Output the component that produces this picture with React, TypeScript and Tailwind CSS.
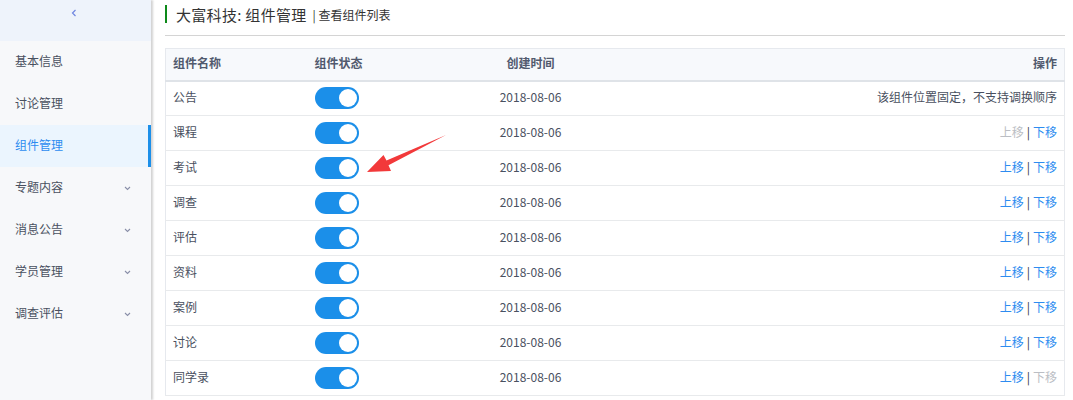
import React from 'react';

const menu = [
  { label: '基本信息' },
  { label: '讨论管理' },
  { label: '组件管理', active: true },
  { label: '专题内容', sub: true },
  { label: '消息公告', sub: true },
  { label: '学员管理', sub: true },
  { label: '调查评估', sub: true },
];

const rows = [
  { name: '公告', fixed: true },
  { name: '课程', up: false, down: true },
  { name: '考试', up: true, down: true },
  { name: '调查', up: true, down: true },
  { name: '评估', up: true, down: true },
  { name: '资料', up: true, down: true },
  { name: '案例', up: true, down: true },
  { name: '讨论', up: true, down: true },
  { name: '同学录', up: true, down: false },
];

function Toggle() {
  return (
    <div className="w-[44px] h-[22px] rounded-full bg-[#1b8fe9] flex items-center justify-end pr-[2px]">
      <div className="w-[18px] h-[18px] rounded-full bg-white" />
    </div>
  );
}

function Chevron() {
  return (
    <svg width="7" height="5" viewBox="0 0 7 5" className="text-[#8a8fa8]">
      <path d="M1 1 L3.5 3.5 L6 1" fill="none" stroke="currentColor" strokeWidth="1.1" />
    </svg>
  );
}

export default function App() {
  return (
    <div className="relative flex h-[400px] w-full overflow-hidden bg-white text-[#495060] font-['Noto_Sans_CJK_SC','Noto_Sans',sans-serif]">
      {/* Sidebar */}
      <aside className="w-[151px] shrink-0 bg-[#f7f8fa] flex flex-col shadow-[2px_0_2px_rgba(0,0,0,0.18)] z-10">
        <div className="h-[41px] bg-[#eef3fb] flex items-center justify-center">
          <svg width="6" height="8" viewBox="0 0 6 8" className="text-[#6f86e0] -mt-[15px] -ml-[4px]">
            <path d="M4.5 1 L1.5 4 L4.5 7" fill="none" stroke="currentColor" strokeWidth="1.2" />
          </svg>
        </div>
        {menu.map((m) => (
          <div
            key={m.label}
            className={
              'h-[42px] flex items-center pl-[15px] pr-[20px] text-[12px] ' +
              (m.active ? 'bg-[#ebf5fe] text-[#2d8cf0] border-r-[3px] border-[#1b8fe9]' : '')
            }
          >
            <span className="flex-1 -mt-[2px]">{m.label}</span>
            {m.sub && <Chevron />}
          </div>
        ))}
      </aside>

      {/* Main */}
      <main className="flex-1 min-w-0 pl-[14px] pr-[8px]">
        <div className="h-[36px] border-b border-[#d4d4d4] flex items-start pt-[4px]">
          <div className="w-[2px] h-[18px] mt-[1px] bg-[#0d8a1a]" />
          <span className="ml-[9px] text-[15px] leading-[22px] tracking-[0.3px] text-[#333]">大富科技: 组件管理</span>
          <span className="ml-[6px] text-[12px] leading-[22px] text-[#333]">| 查看组件列表</span>
        </div>

        <table className="mt-[12px] w-full border border-[#e6e9ee] border-collapse text-[12px] table-fixed">
          <colgroup>
            <col className="w-[142px]" />
            <col className="w-[142px]" />
            <col className="w-[162px]" />
            <col />
          </colgroup>
          <thead>
            <tr className="h-[32px] bg-[#f7f9fc] border-b-2 border-[#dfe3e8] font-bold text-[#515a6e]">
              <th className="text-left pl-[7px] pb-[2px] font-bold">组件名称</th>
              <th className="text-left pl-[7px] pb-[2px] font-bold">组件状态</th>
              <th className="text-center pb-[2px] font-bold">创建时间</th>
              <th className="text-right pr-[7px] pb-[2px] font-bold">操作</th>
            </tr>
          </thead>
          <tbody>
            {rows.map((r) => (
              <tr key={r.name} className="h-[35px] border-b border-[#e8eaec]">
                <td className="pl-[7px] pb-[3px]">{r.name}</td>
                <td className="pl-[7px]">
                  <Toggle />
                </td>
                <td className="text-center pb-[3px]">2018-08-06</td>
                <td className="text-right pr-[7px] pb-[3px]">
                  {r.fixed ? (
                    <span>该组件位置固定，不支持调换顺序</span>
                  ) : (
                    <span>
                      <span className={r.up ? 'text-[#2d8cf0]' : 'text-[#bbbec4]'}>上移</span>
                      <span className="text-[#333] mx-[3px]">|</span>
                      <span className={r.down ? 'text-[#2d8cf0]' : 'text-[#bbbec4]'}>下移</span>
                    </span>
                  )}
                </td>
              </tr>
            ))}
          </tbody>
        </table>
      </main>

      {/* annotation arrow */}
      <svg className="absolute left-0 top-0 pointer-events-none z-20" width="1073" height="400">
        <polygon
          points="367,172 383.5,155 386.5,160.5 446,135 388.5,165.2 391,171"
          fill="#f2393a"
        />
      </svg>
    </div>
  );
}
